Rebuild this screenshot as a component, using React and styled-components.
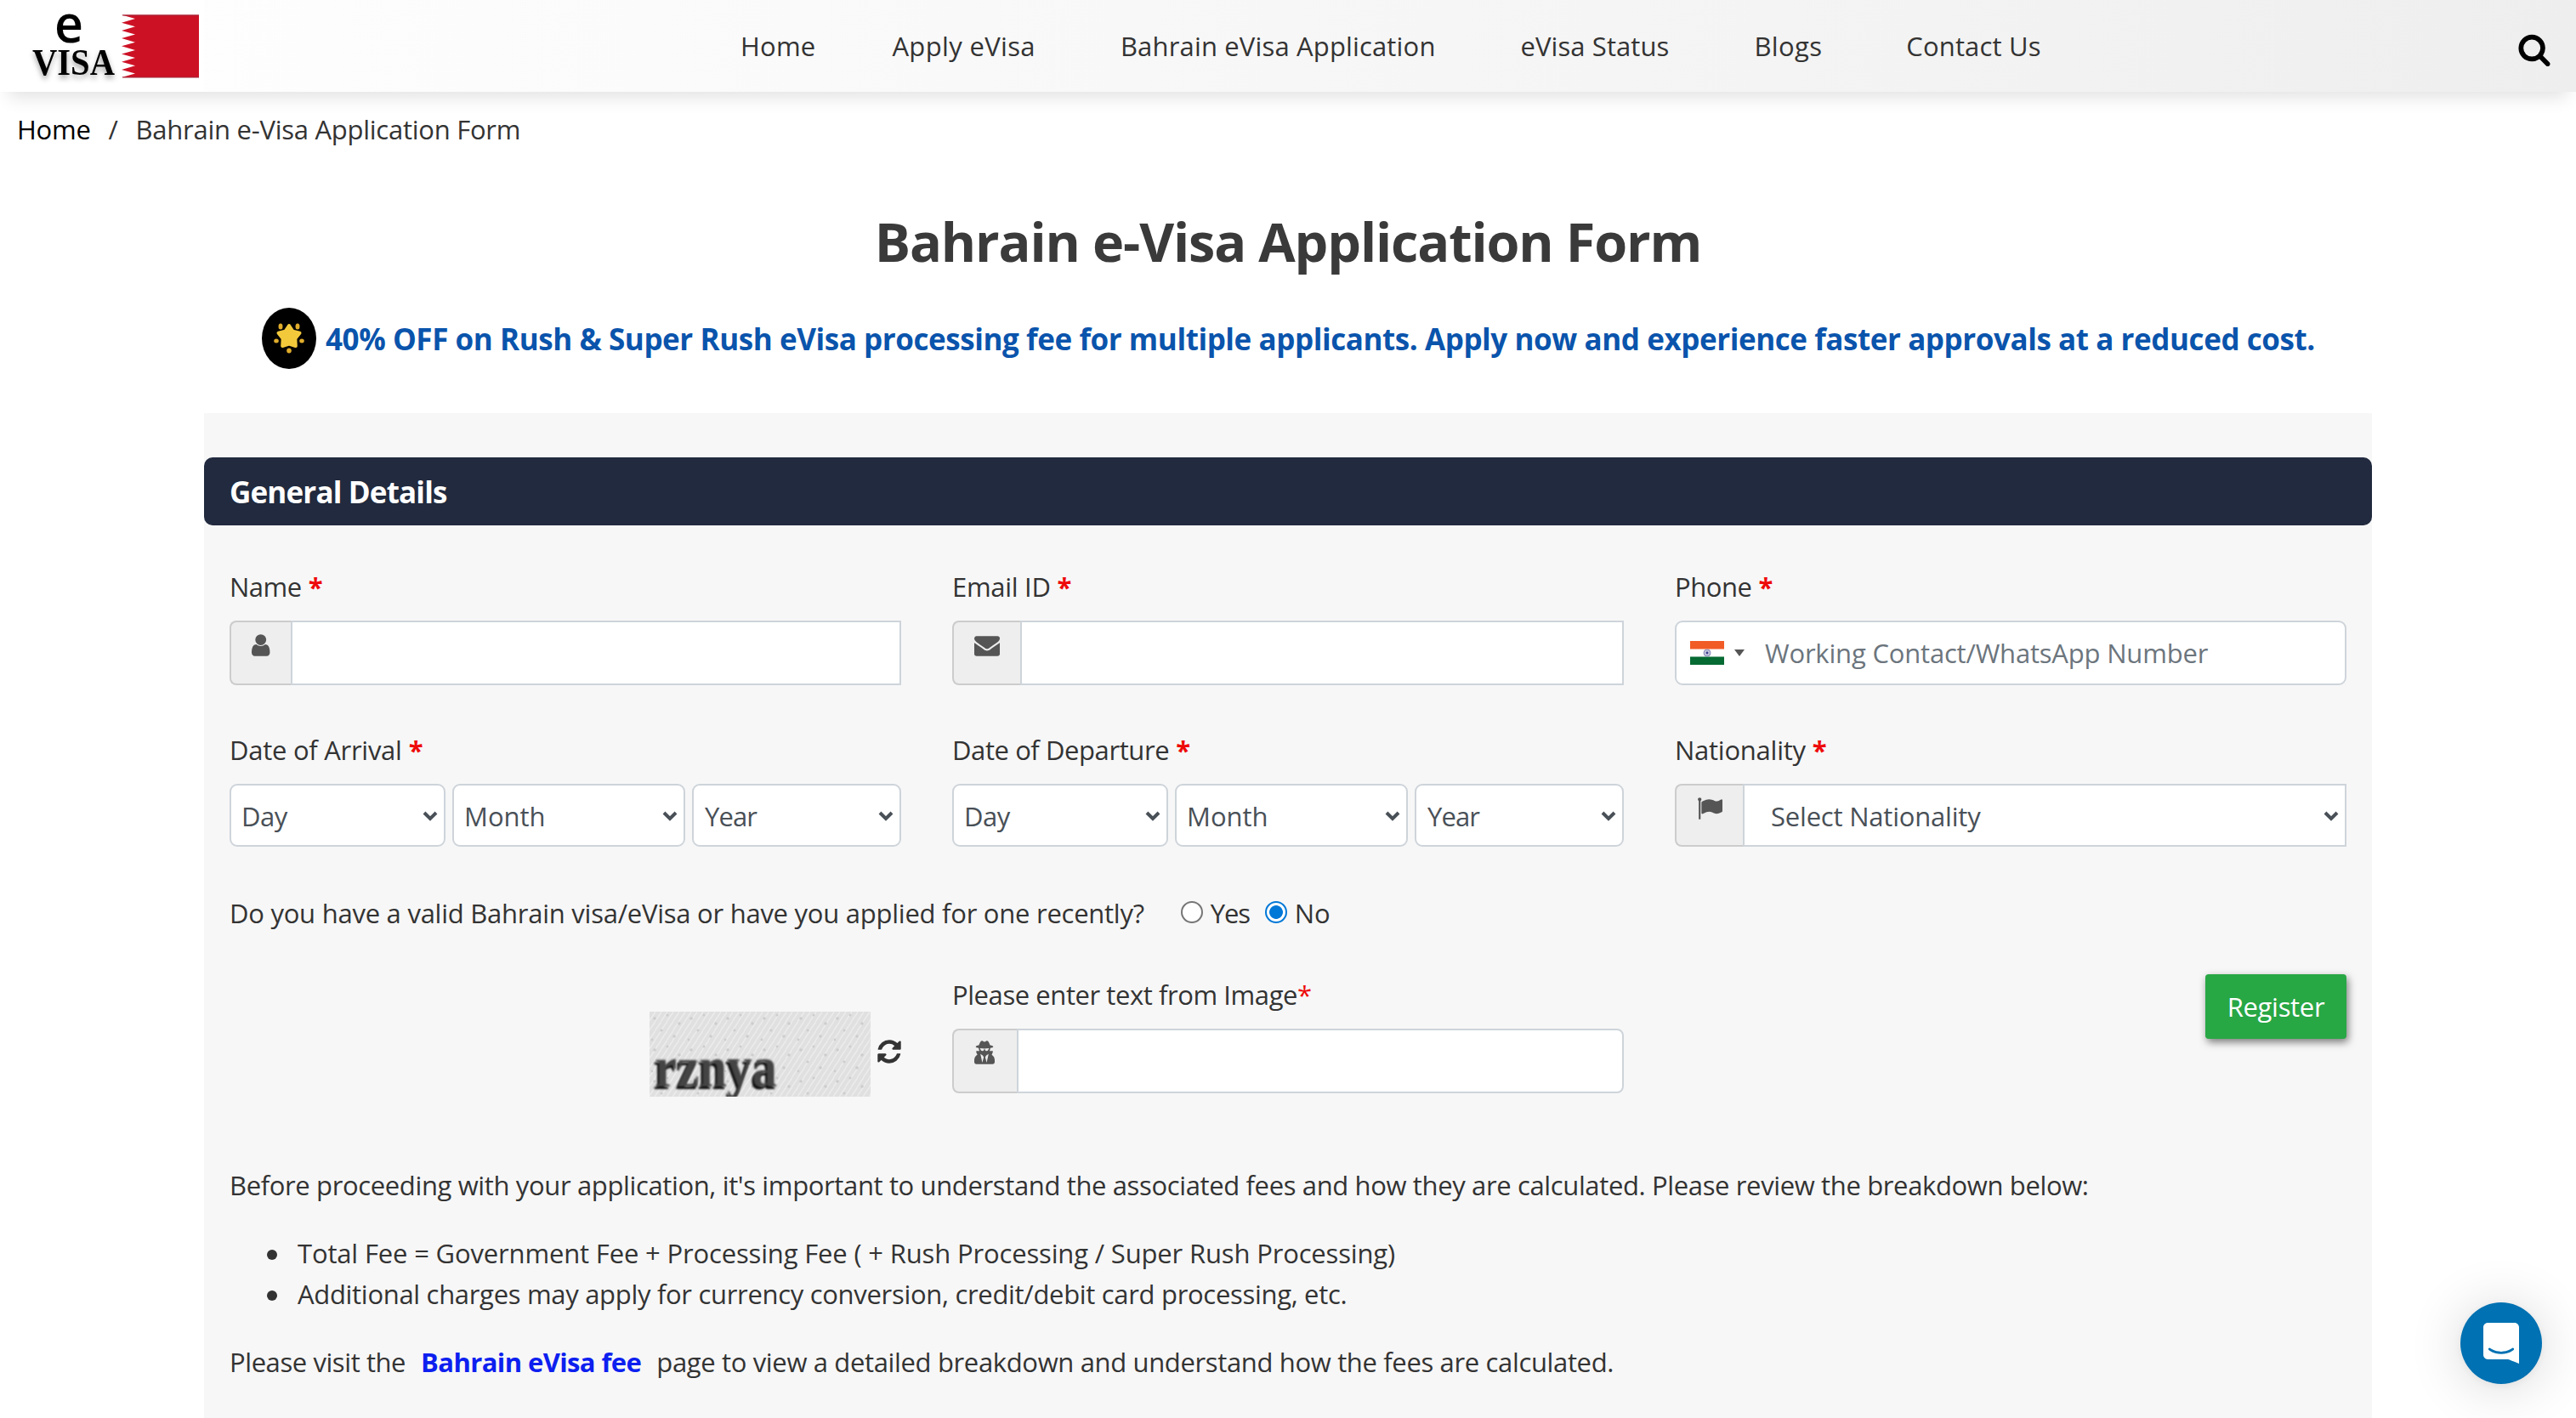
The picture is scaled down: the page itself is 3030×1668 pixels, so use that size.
import React, { useState } from 'react'
import styled, { createGlobalStyle, css } from 'styled-components'
import { FaUserSecret } from 'react-icons/fa'

const GlobalStyle = createGlobalStyle`
  * {
    box-sizing: border-box;
  }
  body {
    margin: 0;
    overflow: hidden;
    background: #fff;
    color: #333;
    font-family: 'Open Sans', 'Noto Sans', sans-serif;
    font-size: 31px;
    line-height: 48px;
  }
`

const Page = styled.div`
  height: 1668px;
  overflow: hidden;
`

const Text = styled.span`
  letter-spacing: ${props => props.track || 0}px;
  white-space: pre;
`

/* header */

const Header = styled.header`
  display: flex;
  align-items: flex-start;
  height: 108px;
  padding: 0 29px 0 20px;
  background: linear-gradient(90deg, #fff 0%, #fbfbfb 25%, #f3f3f3 75%, #eee 100%);
  box-shadow: 0 16px 20px -10px rgba(0, 0, 0, 0.12);
`

const Logo = styled.svg`
  flex: none;
  width: 220px;
  height: 108px;
`

const LogoWord = styled.text`
  filter: drop-shadow(0 4px 3px rgba(0, 0, 0, 0.35));
`

const Nav = styled.nav`
  display: flex;
  flex: 1;
  margin-left: 631px;
  padding-top: 30px;
`

const NavLink = styled.a`
  margin-right: ${props => props.gap || 100}px;
  color: #333;
  font-weight: 500;
  letter-spacing: ${props => props.track || 0}px;
  white-space: nowrap;
`

const SearchIcon = styled.svg`
  width: 40px;
  height: 40px;
  margin-top: 38px;
`

const Breadcrumb = styled.div`
  display: flex;
  padding: 20px 20px 0;
  letter-spacing: -0.26px;
`

const Crumb = styled.span`
  color: ${props => (props.link ? '#000' : '#333')};
`

const Slash = styled.span`
  width: 53px;
  text-align: center;
`

/* headline */

const Title = styled.h1`
  margin: 70px 0 0;
  color: #3a3a3a;
  font-size: 63px;
  line-height: 76px;
  text-align: center;
  letter-spacing: -1.16px;
`

const Promo = styled.div`
  display: flex;
  align-items: center;
  height: 72px;
  margin: 40px 0 0 308px;
  color: #0a54ac;
  font-size: 35px;
  font-weight: 700;
  white-space: nowrap;

  ${Text} {
    padding-top: 2px;
  }
`

const PromoBadge = styled.span`
  display: flex;
  align-items: center;
  justify-content: center;
  flex: none;
  width: 64px;
  height: 72px;
  margin-right: 11px;
  border-radius: 50%;
  background: #000;
`

/* form */

const Panel = styled.main`
  width: 2550px;
  height: 1300px;
  margin: 52px auto 0;
  padding-top: 52px;
  background: #f7f7f7;
`

const SectionBar = styled.h2`
  height: 80px;
  margin: 0;
  padding: 0 30px;
  border-radius: 10px;
  background: #212a3e;
  color: #fff;
  font-size: 35px;
  line-height: 82px;
`

const Body = styled.div`
  padding: 0 30px;
`

const Row = styled.div`
  display: grid;
  grid-template-columns: repeat(3, 790px);
  column-gap: 60px;
  margin-top: ${props => props.top}px;
`

const Label = styled.label`
  display: block;
  height: 48px;
  margin-bottom: 16px;
`

const Required = styled.b`
  color: #ee0a0a;
  font-weight: ${props => (props.light ? 400 : 700)};
  margin-left: ${props => (props.light ? 0 : 8)}px;
`

const Control = styled.div`
  display: flex;
  height: ${props => props.height || 76}px;
`

const Addon = styled.span`
  flex: none;
  width: ${props => props.width}px;
  padding: 12px 0 0 24px;
  border: 2px solid #ccc;
  border-right: 0;
  border-radius: 8px 0 0 8px;
  background: #eee;
  color: #555;
  line-height: 0;
`

const SecretIcon = styled(FaUserSecret)`
  width: 24px;
  height: 28px;
`

const box = css`
  border: 2px solid #ced4da;
  background: #fff;
  color: #495057;
`

const Input = styled.input`
  ${box}
  flex: 1;
  min-width: 0;
  padding: 0 24px;
  border-radius: ${props => (props.rounded ? '0 8px 8px 0' : 0)};
  font: inherit;
  outline: none;
`

const PhoneBox = styled.div`
  ${box}
  display: flex;
  align-items: center;
  flex: 1;
  padding-left: 16px;
  border-radius: 9px;
`

const PhoneInput = styled.input`
  flex: 1;
  margin-left: 24px;
  padding: 0;
  border: 0;
  background: none;
  font: inherit;
  letter-spacing: -0.19px;
  outline: none;

  &::placeholder {
    color: #6c757d;
    opacity: 1;
  }
`

const Caret = styled.span`
  margin-left: 12px;
  border: 6px solid transparent;
  border-top: 8px solid #555;
  border-bottom: 0;
`

const SelectBox = styled.div`
  ${box}
  display: flex;
  align-items: center;
  width: ${props => (props.width ? `${props.width}px` : 'auto')};
  flex: ${props => (props.width ? 'none' : 1)};
  margin-right: ${props => props.gap || 0}px;
  padding: 1px 7px 0 ${props => props.indent || 12}px;
  border-radius: ${props => (props.square ? 0 : 9)}px;
`

const NativeSelect = styled.select`
  appearance: none;
  flex: 1;
  min-width: 0;
  height: 48px;
  padding: 0;
  border: 0;
  background: none;
  color: inherit;
  font: inherit;
  letter-spacing: ${props => props.track || 0}px;
  outline: none;
`

const Question = styled.div`
  display: flex;
  align-items: center;
  margin-top: 54px;
  height: 48px;
`

const Radio = styled.input`
  appearance: none;
  width: 26px;
  height: 26px;
  margin: 0 9px 2px ${props => props.before}px;
  border: 2px solid #767676;
  border-radius: 50%;
  background: #fff;

  &:checked {
    border-color: #0078d7;
    background: radial-gradient(circle, #0078d7 7.5px, #fff 8.3px);
  }
`

const CaptchaCell = styled.div`
  display: flex;
  align-items: flex-start;
  justify-content: flex-end;
  padding-top: 44px;
`

const CaptchaImage = styled.svg`
  width: 260px;
  height: 100px;
  margin-right: 6px;
`

const CaptchaText = styled.text`
  filter: blur(0.8px) drop-shadow(-2px 3px 0 #0c0c0c);
`

const RefreshIcon = styled.svg`
  width: 32px;
  height: 32px;
  margin: 31px -2px 0 0;
`

const ButtonCell = styled.div`
  display: flex;
  justify-content: flex-end;
  align-items: flex-start;
`

const Register = styled.button`
  width: 166px;
  height: 76px;
  padding: 0;
  border: 0;
  border-radius: 4px;
  background: #28a745;
  box-shadow: 2px 4px 10px rgba(0, 0, 0, 0.5);
  color: #fff;
  font: inherit;
  letter-spacing: -0.3px;
`

const Paragraph = styled.p`
  margin: ${props => props.top}px 0 0;
  white-space: nowrap;
`

const List = styled.ul`
  margin: 32px 0 0;
  padding-left: 44px;
  list-style: none;
`

const ListItem = styled.li`
  display: flex;
  align-items: center;

  &::before {
    content: '';
    width: 12px;
    height: 12px;
    margin: 4px 24px 0 0;
    border-radius: 50%;
    background: #333;
  }
`

const FeeLink = styled.a`
  margin: 0 18px;
  color: #0d1fef;
  font-weight: 700;
  letter-spacing: -0.6px;
`

const ChatButton = styled.button`
  position: fixed;
  right: 40px;
  bottom: 40px;
  display: flex;
  align-items: center;
  justify-content: center;
  width: 96px;
  height: 96px;
  padding: 0;
  border: 0;
  border-radius: 50%;
  background: #0071b2;
  box-shadow: 0 2px 12px rgba(0, 0, 0, 0.06), 0 4px 64px rgba(0, 0, 0, 0.16);
`

const iconPaths = {
  search:
    'M1216 832q0-185-131.5-316.5t-316.5-131.5-316.5 131.5-131.5 316.5 131.5 316.5 316.5 131.5 316.5-131.5 131.5-316.5zm512 832q0 52-38 90t-90 38q-54 0-90-38l-343-342q-179 124-399 124-143 0-273.5-55.5t-225-150-150-225-55.5-273.5 55.5-273.5 150-225 225-150 273.5-55.5 273.5 55.5 225 150 150 225 55.5 273.5q0 220-124 399l343 343q37 37 37 90z',
  user:
    'M1536 1399q0 109-62.5 187t-150.5 78h-854q-88 0-150.5-78t-62.5-187q0-85 8.5-160.5t31.5-152 58.5-131 94-89 134.5-34.5q131 128 313 128t313-128q76 0 134.5 34.5t94 89 58.5 131 31.5 152 8.5 160.5zm-256-887q0 159-112.5 271.5t-271.5 112.5-271.5-112.5-112.5-271.5 112.5-271.5 271.5-112.5 271.5 112.5 112.5 271.5z',
  envelope:
    'M1792 710v794q0 66-47 113t-113 47h-1472q-66 0-113-47t-47-113v-794q44 49 101 87 362 246 497 345 57 42 92.5 65.5t94.5 48 110 24.5h2q51 0 110-24.5t94.5-48 92.5-65.5q170-123 498-345 57-39 100-87zm0-294q0 79-49 151t-122 123q-376 261-468 325-10 7-42.5 31t-54 38.5-52 32.5-57.5 27-50 9h-2q-23 0-50-9t-57.5-27-52-32.5-54-38.5-42.5-31q-91-64-262-182.5t-205-142.5q-62-42-117-115.5t-55-136.5q0-78 41.5-130t118.5-52h1472q65 0 112.5 47t47.5 113z',
  flag:
    'M320 256q0 72-64 110v1266q0 13-9.5 22.5t-22.5 9.5h-64q-13 0-22.5-9.5t-9.5-22.5v-1266q-64-38-64-110 0-53 37.5-90.5t90.5-37.5 90.5 37.5 37.5 90.5zm1472 64v763q0 25-12.5 38.5t-39.5 27.5q-215 116-369 116-61 0-123.5-22t-108.5-48-115.5-48-142.5-22q-192 0-464 146-17 9-33 9-26 0-45-19t-19-45v-742q0-32 31-55 21-14 79-43 236-120 421-120 107 0 200 29t219 88q38 19 88 19 54 0 117.5-21t110-47 88-47 54.5-21q26 0 45 19t19 45z',
  refresh:
    'M1639 1056q0 5-1 7-64 268-268 434.5t-478 166.5q-146 0-282.5-55t-243.5-157l-129 129q-19 19-45 19t-45-19-19-45v-448q0-26 19-45t45-19h448q26 0 45 19t19 45-19 45l-137 137q71 66 161 102t187 36q134 0 250-65t186-179q11-17 53-117 8-23 30-23h192q13 0 22.5 9.5t9.5 22.5zm25-800v448q0 26-19 45t-45 19h-448q-26 0-45-19t-19-45 19-45l138-138q-148-137-349-137-134 0-250 65t-186 179q-11 17-53 117-8 23-30 23h-199q-13 0-22.5-9.5t-9.5-22.5v-7q65-268 270-434.5t480-166.5q146 0 284 55.5t245 156.5l130-129q19-19 45-19t45 19 19 45z',
}

const Chevron = () => (
  <svg width="18" height="12" viewBox="0 0 18 12">
    <path d="M2 2l7 7 7-7" fill="none" stroke="#495057" strokeWidth="4" />
  </svg>
)

const AddonIcon = ({ name, shift = 0 }) => (
  <svg width="30" height="30" viewBox={`${shift} 0 1792 1792`}>
    <path d={iconPaths[name]} fill="#555" />
  </svg>
)

const Select = ({ label, track, ...rest }) => (
  <SelectBox {...rest}>
    <NativeSelect track={track}>
      <option>{label}</option>
    </NativeSelect>
    <Chevron />
  </SelectBox>
)

const FieldLabel = ({ track, children }) => (
  <Label>
    <Text track={track}>{children}</Text>
    <Required>*</Required>
  </Label>
)

const DateField = ({ label, track }) => (
  <div>
    <FieldLabel track={track}>{label}</FieldLabel>
    <Control height={74}>
      <Select label="Day" width={254} gap={8} track={-0.5} />
      <Select label="Month" width={274} gap={8} />
      <Select label="Year" width={246} indent={13} track={-0.9} />
    </Control>
  </div>
)

const BahrainLogo = () => (
  <Logo viewBox="0 0 220 108">
    <rect width="220" height="108" fill="#fff" />
    <text x="44" y="50" fontFamily="Open Sans" fontSize="62" fontWeight="600" textLength="34" lengthAdjust="spacingAndGlyphs">e</text>
    <LogoWord x="18" y="88" fontFamily="Liberation Serif" fontSize="44" fontWeight="700" textLength="97" lengthAdjust="spacingAndGlyphs">VISA</LogoWord>
    <path
      fill="#cd1125"
      d="M214 17.500H123l16 4.600-16 4.600 16 4.600-16 4.600 16 4.600-16 4.600 16 4.600-16 4.600 16 4.600-16 4.600 16 4.600-16 4.600 16 4.600-16 4.600 16 4.600-16 4.600H214z"
    />
    <path d="M124 18h90M124 91h90" stroke="#9c2a3c" strokeWidth="1" />
  </Logo>
)

const IndiaFlag = () => (
  <svg width="40" height="28" viewBox="0 0 40 28">
    <rect width="40" height="28" fill="#fff" />
    <rect width="40" height="9.500" fill="#f15b25" />
    <rect y="18.500" width="40" height="9.500" fill="#066a33" />
    <circle cx="20" cy="14" r="4" fill="#c5c6df" stroke="#8687b5" />
    <circle cx="20" cy="14" r="1.400" fill="#3b3d8c" />
  </svg>
)

const Star = () => (
  <svg width="36" height="36" viewBox="0 0 36 36">
    <path
      fill="#f3c93c"
      stroke="#f3c93c"
      strokeWidth="4"
      strokeLinejoin="round"
      d="M18 3l4.500 6.800 8 2-5.200 6.400.5 8.800L18 24.500 10.200 27l.5-8.800-5.200-6.400 8-2z"
    />
    <g fill="#e0ac2b">
      <ellipse cx="8" cy="4" rx="2.500" ry="3.500" />
      <ellipse cx="28" cy="4" rx="2.500" ry="3.500" />
      <ellipse cx="3" cy="21" rx="2.800" ry="2.500" />
      <ellipse cx="33" cy="21" rx="2.800" ry="2.500" />
      <ellipse cx="18" cy="32.500" rx="2.800" ry="3" />
    </g>
  </svg>
)

const Captcha = () => (
  <CaptchaImage viewBox="0 0 260 100">
    <defs>
      <pattern id="hatch" width="7" height="11" patternUnits="userSpaceOnUse">
        <path d="M-1 12L8-1M-4.500 6L1-2M5 14l5-8" stroke="#ececec" strokeWidth="1.500" />
      </pattern>
      <pattern id="dots" width="43" height="37" patternUnits="userSpaceOnUse">
        <g fill="#cdcdcd">
          <circle cx="6" cy="8" r="1.800" />
          <circle cx="21" cy="4" r="1.500" />
          <circle cx="35" cy="14" r="1.800" />
          <circle cx="14" cy="22" r="1.600" />
          <circle cx="29" cy="29" r="1.800" />
          <circle cx="3" cy="33" r="1.400" />
        </g>
      </pattern>
    </defs>
    <rect width="260" height="100" fill="#e0e0e0" />
    <rect width="260" height="100" fill="url(#hatch)" />
    <rect width="260" height="100" fill="url(#dots)" />
    <CaptchaText
      x="6"
      y="88"
      fill="#444"
      fontFamily="Liberation Serif"
      fontSize="68"
      fontWeight="700"
      textLength="144"
      lengthAdjust="spacingAndGlyphs"
    >
      rznya
    </CaptchaText>
  </CaptchaImage>
)

const App = () => {
  const [applied, setApplied] = useState('no')

  return (
    <Page>
      <GlobalStyle />
      <Header>
        <BahrainLogo />
        <Nav>
          <NavLink gap={90} track={0.2}>Home</NavLink>
          <NavLink track={0.35}>Apply eVisa</NavLink>
          <NavLink track={0.16}>Bahrain eVisa Application</NavLink>
          <NavLink track={0.08}>eVisa Status</NavLink>
          <NavLink gap={99} track={0.35}>Blogs</NavLink>
          <NavLink track={0.15}>Contact Us</NavLink>
        </Nav>
        <SearchIcon viewBox="0 0 1792 1792">
          <path d={iconPaths.search} />
        </SearchIcon>
      </Header>

      <Breadcrumb>
        <Crumb link>Home</Crumb>
        <Slash>/</Slash>
        <Crumb>Bahrain e-Visa Application Form</Crumb>
      </Breadcrumb>

      <Title>Bahrain e-Visa Application Form</Title>
      <Promo>
        <PromoBadge>
          <Star />
        </PromoBadge>
        <Text track={-0.43}>
          40% OFF on Rush &amp; Super Rush eVisa processing fee for multiple applicants. Apply now and experience faster approvals at a reduced cost.
        </Text>
      </Promo>

      <Panel>
        <SectionBar>
          <Text track={-0.84}>General Details</Text>
        </SectionBar>
        <Body>
          <Row top={48}>
            <div>
              <FieldLabel track={-0.5}>Name</FieldLabel>
              <Control>
                <Addon width={72}>
                  <AddonIcon name="user" shift={256} />
                </Addon>
                <Input />
              </Control>
            </div>
            <div>
              <FieldLabel track={-0.3}>Email ID</FieldLabel>
              <Control>
                <Addon width={80}>
                  <AddonIcon name="envelope" />
                </Addon>
                <Input />
              </Control>
            </div>
            <div>
              <FieldLabel track={-0.45}>Phone</FieldLabel>
              <Control>
                <PhoneBox>
                  <IndiaFlag />
                  <Caret />
                  <PhoneInput placeholder="Working Contact/WhatsApp Number" />
                </PhoneBox>
              </Control>
            </div>
          </Row>

          <Row top={52}>
            <DateField label="Date of Arrival" track={-0.27} />
            <DateField label="Date of Departure" track={-0.42} />
            <div>
              <FieldLabel track={-0.25}>Nationality</FieldLabel>
              <Control height={74}>
                <Addon width={80}>
                  <AddonIcon name="flag" />
                </Addon>
                <Select label="Select Nationality" indent={31} track={-0.2} square />
              </Control>
            </div>
          </Row>

          <Question>
            <Text track={-0.25}>Do you have a valid Bahrain visa/eVisa or have you applied for one recently?</Text>
            <Radio type="radio" before={43} checked={applied === 'yes'} onChange={() => setApplied('yes')} />
            <Text track={-1.2}>Yes</Text>
            <Radio type="radio" before={18} checked={applied === 'no'} onChange={() => setApplied('no')} />
            <Text>No</Text>
          </Question>

          <Row top={48}>
            <CaptchaCell>
              <Captcha />
              <RefreshIcon viewBox="0 0 1792 1792">
                <path d={iconPaths.refresh} fill="#333" />
              </RefreshIcon>
            </CaptchaCell>
            <div>
              <Label>
                <Text track={-0.43}>Please enter text from Image</Text>
                <Required light>*</Required>
              </Label>
              <Control>
                <Addon width={76}>
                  <SecretIcon />
                </Addon>
                <Input rounded />
              </Control>
            </div>
            <ButtonCell>
              <Register>Register</Register>
            </ButtonCell>
          </Row>

          <Paragraph top={80}>
            <Text track={-0.365}>
              Before proceeding with your application, it's important to understand the associated fees and how they are calculated. Please review the breakdown below:
            </Text>
          </Paragraph>
          <List>
            <ListItem>
              <Text track={-0.16}>Total Fee = Government Fee + Processing Fee ( + Rush Processing / Super Rush Processing)</Text>
            </ListItem>
            <ListItem>
              <Text track={-0.31}>Additional charges may apply for currency conversion, credit/debit card processing, etc.</Text>
            </ListItem>
          </List>
          <Paragraph top={32}>
            <Text track={-0.42}>Please visit the</Text>
            <FeeLink>Bahrain eVisa fee</FeeLink>
            <Text track={-0.35}>page to view a detailed breakdown and understand how the fees are calculated.</Text>
          </Paragraph>
        </Body>
      </Panel>

      <ChatButton aria-label="Open chat">
        <svg width="42" height="48" viewBox="0 0 28 32">
          <path
            fill="#fff"
            d="M28 32s-4.714-1.855-8.527-3.340H3.437C1.540 28.660 0 27.026 0 25.013V3.644C0 1.633 1.540 0 3.437 0h21.125c1.898 0 3.437 1.632 3.437 3.645v18.404H28V32zm-4.139-11.982a.88.880 0 00-1.292-.105c-.030.026-3.015 2.681-8.570 2.681-5.486 0-8.517-2.636-8.571-2.684a.88.880 0 00-1.290.107 1.010 1.010 0 00-.219.708.992.992 0 00.318.664c.142.128 3.537 3.150 9.762 3.150 6.226 0 9.621-3.022 9.763-3.150a.992.992 0 00.317-.664 1.010 1.010 0 00-.218-.707z"
          />
        </svg>
      </ChatButton>
    </Page>
  )
}

export default App
